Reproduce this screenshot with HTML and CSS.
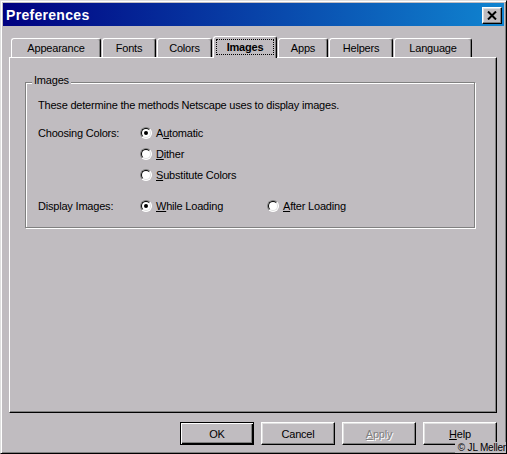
FILE: index.html
```html
<!DOCTYPE html>
<html>
<head>
<meta charset="utf-8">
<link rel="stylesheet" href="styles.css">
</head>
<body>
<div class="window">
  <div class="titlebar">
    <span class="title">Preferences</span>
    <button class="close" aria-label="Close">
      <svg width="10" height="9" viewBox="0 0 10 9"><path d="M1 0.5 L9 8.5 M9 0.5 L1 8.5" stroke="#000" stroke-width="2" fill="none"/></svg>
    </button>
  </div>
  <div class="tabs">
    <div class="tab tab-appearance">Appearance</div>
    <div class="tab tab-fonts">Fonts</div>
    <div class="tab tab-colors">Colors</div>
    <div class="tab tab-images active"><span class="focus">Images</span></div>
    <div class="tab tab-apps">Apps</div>
    <div class="tab tab-helpers">Helpers</div>
    <div class="tab tab-language">Language</div>
  </div>
  <div class="panel">
    <div class="group">
      <span class="legend">Images</span>
      <p class="desc">These determine the methods Netscape uses to display images.</p>
      <div class="rows">
        <div class="row">
          <span class="label">Choosing Colors:</span>
          <span class="opt"><span class="radio checked"></span><span>A<u>u</u>tomatic</span></span>
        </div>
        <div class="row">
          <span class="label"></span>
          <span class="opt"><span class="radio"></span><span><u>D</u>ither</span></span>
        </div>
        <div class="row">
          <span class="label"></span>
          <span class="opt"><span class="radio"></span><span><u>S</u>ubstitute Colors</span></span>
        </div>
      </div>
      <div class="rows">
        <div class="row">
          <span class="label">Display Images:</span>
          <span class="opt opt-wide"><span class="radio checked"></span><span><u>W</u>hile Loading</span></span>
          <span class="opt"><span class="radio"></span><span><u>A</u>fter Loading</span></span>
        </div>
      </div>
    </div>
  </div>
  <div class="buttons">
    <button class="btn default">OK</button>
    <button class="btn">Cancel</button>
    <button class="btn disabled"><span><u>A</u>pply</span></button>
    <button class="btn"><span><u>H</u>elp</span></button>
  </div>
  <div class="copyright">© JL Meller</div>
</div>
</body>
</html>
```
FILE: styles.css
```css
html, body {
  margin: 0;
  background: #c0bcc0;
}
body {
  font-family: "Liberation Sans", Arial, sans-serif;
  font-size: 11px;
  letter-spacing: -0.2px;
  color: #000;
}
.window {
  position: relative;
  width: 507px;
  height: 454px;
  box-sizing: border-box;
  border: 1px solid;
  border-color: #dfdfdf #000 #000 #dfdfdf;
  box-shadow: inset 1px 1px #fff, inset -1px -1px #808080;
  padding: 2px;
  display: flex;
  flex-direction: column;
  background: #c0bcc0;
}
.titlebar {
  height: 23px;
  flex: none;
  background: linear-gradient(90deg, #000080, #1084d0);
  display: flex;
  align-items: center;
  justify-content: space-between;
  padding: 0 2px 0 3px;
}
.title {
  color: #fff;
  font-weight: bold;
  font-size: 14px;
  letter-spacing: 0.3px;
}
.close {
  width: 20px;
  height: 17px;
  box-sizing: border-box;
  padding: 0;
  margin: 1px 0 0 0;
  background: #c0bcc0;
  border: 1px solid;
  border-color: #fff #000 #000 #fff;
  box-shadow: inset -1px -1px #808080, inset 1px 1px #dfdfdf;
  display: flex;
  align-items: center;
  justify-content: center;
}
.tabs {
  margin-top: 10px;
  height: 21px;
  flex: none;
  display: flex;
  align-items: flex-end;
  padding-left: 8px;
  position: relative;
  z-index: 1;
}
.tab {
  height: 19px;
  box-sizing: border-box;
  border-top: 1px solid #fff;
  border-left: 1px solid #fff;
  border-right: 1px solid #000;
  box-shadow: inset -1px 0 #808080;
  border-top-left-radius: 3px;
  border-top-right-radius: 3px;
  display: flex;
  align-items: center;
  justify-content: center;
  margin-right: 1px;
  background: #c0bcc0;
  padding-bottom: 1px;
}
.tab-appearance { width: 90px; }
.tab-fonts { width: 54px; }
.tab-colors { width: 55px; }
.tab-images { width: 64px; }
.tab-apps { width: 50px; }
.tab-helpers { width: 64px; }
.tab-language { width: 78px; }
.tab.active {
  height: 22px;
  margin-bottom: -1px;
  font-weight: bold;
  padding-bottom: 2px;
}
.focus {
  display: block;
  border: 1px dotted #000;
  padding: 1px 10px;
  line-height: 12px;
}
.panel {
  flex: none;
  margin: 0 7px 0 6px;
  height: 356px;
  box-sizing: border-box;
  border: 1px solid;
  border-color: #fff #000 #000 #fff;
  box-shadow: inset -1px -1px #808080;
  padding: 24px 0 0 15px;
}
.group {
  position: relative;
  width: 450px;
  height: 146px;
  box-sizing: border-box;
  border: 1px solid #808080;
  box-shadow: inset 1px 1px #fff, 1px 1px #fff;
  padding: 16px 0 0 12px;
}
.legend {
  position: absolute;
  top: -9px;
  left: 6px;
  padding: 0 2px;
  background: #c0bcc0;
  line-height: 13px;
}
.desc {
  margin: 0;
  line-height: 13px;
}
.rows {
  margin-top: 10px;
}
.row {
  display: flex;
  align-items: center;
  height: 21px;
}
.label {
  width: 102px;
  flex: none;
}
.opt {
  display: flex;
  align-items: center;
  gap: 4px;
}
.opt-wide {
  width: 127px;
}
.radio {
  position: relative;
  width: 12px;
  height: 12px;
  flex: none;
  box-sizing: border-box;
  border-radius: 50%;
  border: 1px solid;
  border-color: #808080 #fff #fff #808080;
  background: #fff;
}
.radio::before {
  content: "";
  position: absolute;
  inset: 0;
  border-radius: 50%;
  border: 1px solid;
  border-color: #000 #dfdfdf #dfdfdf #000;
}
.radio.checked::after {
  content: "";
  position: absolute;
  left: 3px;
  top: 3px;
  width: 4px;
  height: 4px;
  border-radius: 50%;
  background: #000;
}
.buttons {
  display: flex;
  justify-content: flex-end;
  gap: 7px;
  margin: 9px 7px 0 0;
}
.btn {
  width: 74px;
  height: 23px;
  box-sizing: border-box;
  padding: 0;
  border: 1px solid;
  border-color: #fff #000 #000 #fff;
  box-shadow: inset -1px -1px #808080, inset 1px 1px #dfdfdf;
  background: #c0bcc0;
  font-family: inherit;
  font-size: 11px;
  letter-spacing: -0.2px;
  color: #000;
  display: flex;
  align-items: center;
  justify-content: center;
}
.btn.default {
  border-color: #000;
  box-shadow: inset 1px 1px #fff, inset -1px -1px #000, inset -2px -2px #808080;
}
.btn.disabled {
  color: #808080;
  text-shadow: 1px 1px #fff;
}
.copyright {
  position: absolute;
  right: 0;
  bottom: 0;
  font-size: 10px;
  line-height: 11px;
  letter-spacing: -0.2px;
  background: #c0bcc0;
  padding-left: 3px;
  color: #000;
}
```
